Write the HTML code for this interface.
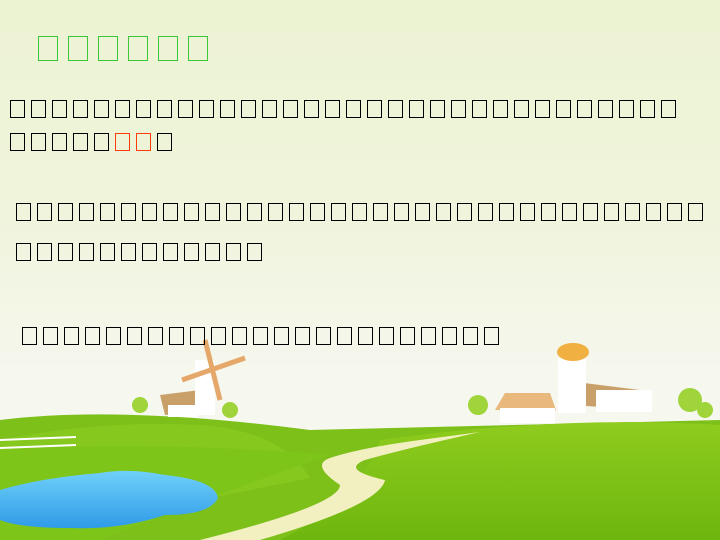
<!DOCTYPE html>
<html><head><meta charset="utf-8"><style>
html,body{margin:0;padding:0}
body{width:720px;height:540px;position:relative;overflow:hidden;background:linear-gradient(#ecf3d2 0%,#f0f4dc 40%,#f6f7ee 70%,#f8f8f2 100%);font-family:"Liberation Sans",sans-serif}
.row{position:absolute;display:flex}
.row span{display:block;box-sizing:border-box;border:1.6px solid #000}
.t span{width:20px;height:25px;border:1.3px solid #3ac83a;margin-right:10px}
.b span{width:15px;height:18px;margin-right:6px}
.b span.r{border-color:#ff3b0a}
svg{position:absolute;left:0;top:0}
</style></head><body>
<svg width="720" height="540" viewBox="0 0 720 540">
<defs>
<linearGradient id="g1" x1="0" y1="0" x2="0" y2="1"><stop offset="0" stop-color="#8fcc1e"/><stop offset="1" stop-color="#6db60e"/></linearGradient>
<linearGradient id="w" x1="0" y1="0" x2="0" y2="1"><stop offset="0" stop-color="#6fd0f8"/><stop offset="1" stop-color="#2f9be8"/></linearGradient>
</defs>
<path d="M0 420 Q120 405 310 430 L720 420 L720 540 L0 540Z" fill="#7dc01a"/>
<path d="M0 440 Q100 420 200 425 Q280 430 310 478 L0 540Z" fill="#86c81e"/>
<path d="M380 440 Q560 415 720 425 L720 540 L280 540 Q360 500 380 440Z" fill="url(#g1)"/>
<path d="M0 450 Q150 440 330 455 Q200 500 100 540 L0 540Z" fill="#7ec51a"/>
<path d="M330 458 Q360 448 420 440 L480 432 Q400 450 365 460 Q340 470 385 480 Q380 505 260 540 L200 540 Q340 505 340 485 Q310 465 330 458Z" fill="#f2efc0"/>
<path d="M0 490 Q40 478 100 473 Q130 468 165 475 Q215 480 218 498 Q210 515 165 515 Q120 530 70 528 Q20 528 0 520Z" fill="url(#w)"/>
<g fill="#c9a06a"><path d="M160 395 L200 390 L205 412 L165 415Z"/><path d="M560 380 L640 390 L650 410 L570 405Z"/></g>
<rect x="195" y="360" width="20" height="55" fill="#fff"/>
<path d="M182 380 L245 358 M205 340 L220 400" stroke="#e6a86a" stroke-width="5"/>
<rect x="168" y="405" width="30" height="12" fill="#fff"/>
<rect x="558" y="358" width="28" height="55" fill="#fff"/>
<ellipse cx="573" cy="352" rx="16" ry="9" fill="#f1b042"/>
<rect x="596" y="390" width="56" height="22" fill="#fff"/>
<path d="M495 410 L505 393 L550 393 L556 410Z" fill="#e9b87c"/><rect x="500" y="408" width="55" height="15" fill="#fff"/>
<g fill="#9fd53a"><circle cx="140" cy="405" r="8"/><circle cx="230" cy="410" r="8"/><circle cx="478" cy="405" r="10"/><circle cx="690" cy="400" r="12"/><circle cx="705" cy="410" r="8"/></g>
<path d="M0 440 L76 437 M0 448 L76 445" stroke="#fff" stroke-width="2"/>
</svg>
<div class="row t" style="left:38px;top:36px"><span></span><span></span><span></span><span></span><span></span><span></span></div>
<div class="row b" style="left:10px;top:100px"><span></span><span></span><span></span><span></span><span></span><span></span><span></span><span></span><span></span><span></span><span></span><span></span><span></span><span></span><span></span><span></span><span></span><span></span><span></span><span></span><span></span><span></span><span></span><span></span><span></span><span></span><span></span><span></span><span></span><span></span><span></span><span></span></div>
<div class="row b" style="left:10px;top:133px"><span></span><span></span><span></span><span></span><span></span><span class="r"></span><span class="r"></span><span></span></div>
<div class="row b" style="left:16px;top:203px"><span></span><span></span><span></span><span></span><span></span><span></span><span></span><span></span><span></span><span></span><span></span><span></span><span></span><span></span><span></span><span></span><span></span><span></span><span></span><span></span><span></span><span></span><span></span><span></span><span></span><span></span><span></span><span></span><span></span><span></span><span></span><span></span><span></span></div>
<div class="row b" style="left:16px;top:243px"><span></span><span></span><span></span><span></span><span></span><span></span><span></span><span></span><span></span><span></span><span></span><span></span></div>
<div class="row b" style="left:22px;top:327px"><span></span><span></span><span></span><span></span><span></span><span></span><span></span><span></span><span></span><span></span><span></span><span></span><span></span><span></span><span></span><span></span><span></span><span></span><span></span><span></span><span></span><span></span><span></span></div>
</body></html>
